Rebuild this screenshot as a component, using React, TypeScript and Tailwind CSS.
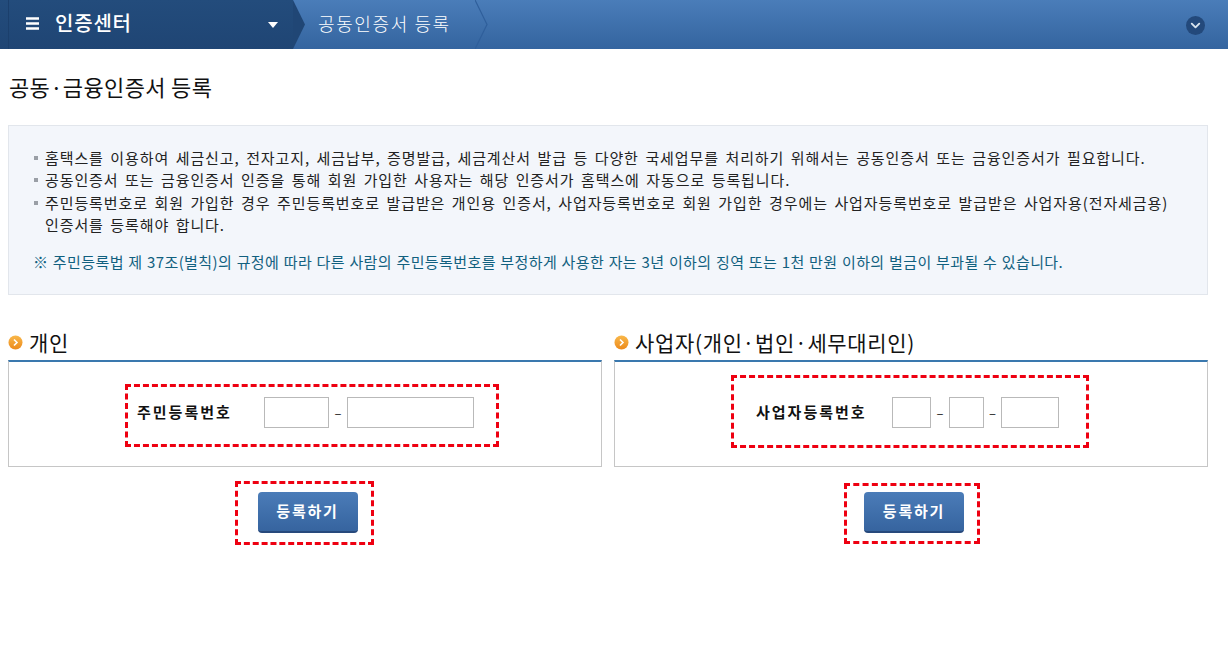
import { ChevronDown } from "lucide-react";

const font = "font-['Noto_Sans_CJK_KR','Liberation_Sans',sans-serif]";

const notices = [
  "홈택스를 이용하여 세금신고, 전자고지, 세금납부, 증명발급, 세금계산서 발급 등 다양한 국세업무를 처리하기 위해서는 공동인증서 또는 금융인증서가 필요합니다.",
  "공동인증서 또는 금융인증서 인증을 통해 회원 가입한 사용자는 해당 인증서가 홈택스에 자동으로 등록됩니다.",
  "주민등록번호로 회원 가입한 경우 주민등록번호로 발급받은 개인용 인증서, 사업자등록번호로 회원 가입한 경우에는 사업자등록번호로 발급받은 사업자용(전자세금용) 인증서를 등록해야 합니다.",
];

const SectionTitle = ({ text }: { text: string }) => (
  <h3 className="flex h-[35px] items-center gap-[6px] text-[21px] font-normal leading-none tracking-[0.65px] text-[#111]">
    <svg width="15" height="15" viewBox="0 0 15 15" className="shrink-0">
      <defs>
        <linearGradient id="dot" x1="0" y1="0" x2="0" y2="1">
          <stop offset="0" stopColor="#f9b84a" />
          <stop offset="1" stopColor="#ec8a1c" />
        </linearGradient>
      </defs>
      <circle cx="7.5" cy="7.5" r="7" fill="url(#dot)" />
      <path d="M6 4.5 9 7.5 6 10.5" fill="none" stroke="#fff" strokeWidth="1.6" />
    </svg>
    {text}
  </h3>
);

const Field = ({ w }: { w: string }) => (
  <input className={`h-[31px] border border-[#b9b9b9] bg-white ${w}`} />
);

const Dash = ({ w }: { w: string }) => (
  <span className={`text-center text-[13px] font-normal tracking-normal text-[#222] ${w}`}>–</span>
);

const SubmitButton = () => (
  <button className="-mt-[2px] h-[41px] w-[100px] rounded-[4px] border-b-2 border-[#27497c] bg-linear-to-b from-[#4b7cb8] to-[#36649f] text-[15px] font-bold tracking-[1.8px] text-white">
    등록하기
  </button>
);

export default function App() {
  return (
    <div className={`h-[653px] overflow-hidden bg-white ${font}`}>
      <header className="flex h-[49px] items-stretch bg-linear-to-b from-[#4a7db9] to-[#34649f] text-white">
        <div className="relative flex w-[293px] items-center bg-linear-to-b from-[#234c7c] to-[#1f4574] pb-[3px] pl-[26px]">
          <span className="absolute left-[8px] top-0 h-full w-px bg-[#1b3f6c]" />
          <svg width="14" height="13" viewBox="0 0 14 13" className="mr-[15px]">
            <path d="M0 1.5h13M0 6.5h13M0 11.5h13" stroke="#fff" strokeWidth="2.4" />
          </svg>
          <span className="text-[20px] font-medium leading-none tracking-[0.8px]">인증센터</span>
          <svg width="10" height="6" viewBox="0 0 10 6" className="absolute left-[268px] top-[22px]">
            <path d="M0 0h10L5 6z" fill="#fff" />
          </svg>
          <svg width="13" height="49" viewBox="0 0 13 49" className="absolute left-[293px] top-0">
            <path d="M0 0 12 24.5 0 49z" fill="#204675" />
          </svg>
        </div>
        <div className="relative flex w-[183px] items-center pb-[3px] pl-[25px] text-[18px] font-light leading-none tracking-[1.6px] text-white">
          공동인증서 등록
          <svg width="13" height="49" viewBox="0 0 13 49" className="absolute left-[182px] top-0">
            <path d="M0 0 12 24.5 0 49" fill="none" stroke="#2f5f9b" strokeWidth="1.2" />
          </svg>
        </div>
        <div className="ml-auto mr-[23px] flex items-center pt-[2px]">
          <span className="flex h-[19px] w-[19px] items-center justify-center rounded-full bg-[#23497b]">
            <ChevronDown size={15} strokeWidth={3} className="text-[#d8e4ee]" />
          </span>
        </div>
      </header>

      <main className="w-[1208px] pl-2">
        <h2 className="mt-[25px] h-[24px] pl-px text-[22px] font-normal leading-[24px] tracking-[0.35px] text-[#111]">
          공동·금융인증서 등록
        </h2>

        <section className="mt-[27px] h-[170px] border border-[#e2e6ec] bg-[#f3f6fb] pl-[24px] pt-[21px] text-[15px] leading-[22.3px] text-[#222]">
          <ul>
            {notices.map((n) => (
              <li key={n} className="relative w-[1148px] pl-[12px] tracking-[0.9px] [word-spacing:2.3px]">
                <span className="absolute left-px top-[9px] h-1 w-1 bg-[#9a9fa6]" />
                {n}
              </li>
            ))}
          </ul>
          <p className="mt-[15px] tracking-[0.4px] text-[#11607f] [word-spacing:0.7px]">
            ※ 주민등록법 제 37조(벌칙)의 규정에 따라 다른 사람의 주민등록번호를 부정하게 사용한 자는 3년 이하의 징역 또는 1천 만원 이하의 벌금이 부과될 수 있습니다.
          </p>
        </section>

        <div className="mt-[30px] grid grid-cols-2 gap-[12px]">
          <div>
            <SectionTitle text="개인" />
            <div className="h-[107px] border border-t-2 border-[#c6c6c6] border-t-[#3a78ae] pl-[116px] pt-[22px]">
              <div className="flex h-[63px] w-[374px] items-center border-[3px] border-dashed border-[#ee0011] pb-[6px] pl-[9px] text-[15px] font-bold tracking-[2px] text-[#111]">
                <span className="w-[127px]">주민등록번호</span>
                <Field w="w-[65px]" />
                <Dash w="w-[18px]" />
                <Field w="w-[127px]" />
              </div>
            </div>
            <div className="mt-[14px] flex justify-center pr-[2px]">
              <div className="flex h-[64px] w-[139px] items-center justify-center border-[3px] border-dashed border-[#ee0011] pl-[7px]">
                <SubmitButton />
              </div>
            </div>
          </div>
          <div>
            <SectionTitle text="사업자(개인·법인·세무대리인)" />
            <div className="h-[107px] border border-t-2 border-[#c6c6c6] border-t-[#3a78ae] pl-[116px] pt-[13px]">
              <div className="flex h-[73px] w-[358px] items-center border-[3px] border-dashed border-[#ee0011] pl-[22px] pt-[2px] text-[15px] font-bold tracking-[2px] text-[#111]">
                <span className="w-[136px]">사업자등록번호</span>
                <Field w="w-[39px]" />
                <Dash w="w-[18px]" />
                <Field w="w-[35px]" />
                <Dash w="w-[17px]" />
                <Field w="w-[58px]" />
              </div>
            </div>
            <div className="ml-[2px] mt-[16px] flex justify-center">
              <div className="flex h-[61px] w-[136px] items-center justify-center border-[3px] border-dashed border-[#ee0011] pl-[4px]">
                <SubmitButton />
              </div>
            </div>
          </div>
        </div>
      </main>
    </div>
  );
}
